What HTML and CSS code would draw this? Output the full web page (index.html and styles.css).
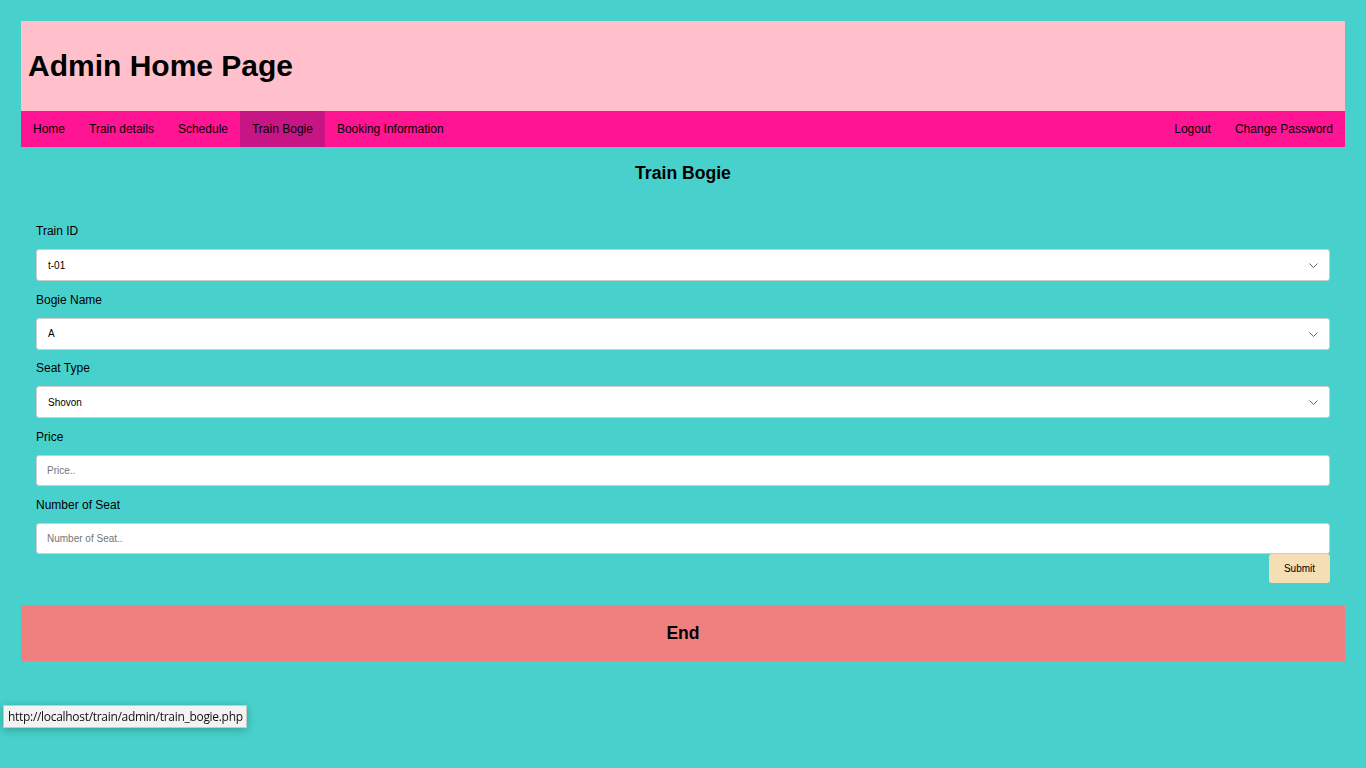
FILE: index.html
```html
<!DOCTYPE html>
<html lang="en">
<head>
<meta charset="utf-8">
<title>Admin Home Page</title>
<link rel="stylesheet" href="styles.css">
</head>
<body>
<div class="page">
  <header class="header">
    <h1 class="title">Admin Home Page</h1>
  </header>
  <nav class="nav">
    <div class="nav-left">
      <a class="nav-link" href="#">Home</a>
      <a class="nav-link" href="#">Train details</a>
      <a class="nav-link" href="#">Schedule</a>
      <a class="nav-link active" href="#">Train Bogie</a>
      <a class="nav-link" href="#">Booking Information</a>
    </div>
    <div class="nav-right">
      <a class="nav-link" href="#">Logout</a>
      <a class="nav-link" href="#">Change Password</a>
    </div>
  </nav>
  <main class="main">
    <h3 class="heading">Train Bogie</h3>
    <form class="form">
      <label class="label">Train ID</label>
      <div class="select-wrap">
        <select class="field select"><option>t-01</option></select>
        <svg class="chevron" width="9" height="5" viewBox="0 0 9 5"><path d="M0.5 0.5 L4.5 4.5 L8.5 0.5" fill="none" stroke="#666" stroke-width="1"/></svg>
      </div>
      <label class="label">Bogie Name</label>
      <div class="select-wrap">
        <select class="field select"><option>A</option></select>
        <svg class="chevron" width="9" height="5" viewBox="0 0 9 5"><path d="M0.5 0.5 L4.5 4.5 L8.5 0.5" fill="none" stroke="#666" stroke-width="1"/></svg>
      </div>
      <label class="label">Seat Type</label>
      <div class="select-wrap">
        <select class="field select"><option>Shovon</option></select>
        <svg class="chevron" width="9" height="5" viewBox="0 0 9 5"><path d="M0.5 0.5 L4.5 4.5 L8.5 0.5" fill="none" stroke="#666" stroke-width="1"/></svg>
      </div>
      <label class="label">Price</label>
      <input class="field input" type="text" placeholder="Price..">
      <label class="label">Number of Seat</label>
      <input class="field input last" type="text" placeholder="Number of Seat..">
      <div class="actions">
        <button class="submit" type="button">Submit</button>
      </div>
    </form>
  </main>
  <footer class="footer">
    <h3 class="footer-text">End</h3>
  </footer>
</div>
<div class="status">http://localhost/train/admin/train_bogie.php</div>
</body>
</html>
```
FILE: styles.css
```css
html, body {
  margin: 0;
  padding: 0;
}
body {
  background: #48d1cc;
  font-family: "Liberation Sans", Arial, sans-serif;
  color: #000;
  min-height: 768px;
}
.page {
  padding: 21px 21px 0 21px;
}
.header {
  background: #ffc0cb;
  height: 90px;
  display: flex;
  align-items: center;
  padding-left: 7px;
}
.title {
  margin: 0;
  font-size: 30px;
  font-weight: bold;
  line-height: 34px;
}
.nav {
  background: #ff1493;
  height: 36px;
  display: flex;
  justify-content: space-between;
}
.nav-left, .nav-right {
  display: flex;
}
.nav-link {
  display: block;
  padding: 0 12px;
  line-height: 36px;
  font-size: 12px;
  color: #000;
  text-decoration: none;
}
.nav-link.active {
  background: #c71585;
}
.main {
  padding: 0 15px;
}
.heading {
  margin: 0;
  padding-top: 16px;
  font-size: 17.6px;
  line-height: 20px;
  text-align: center;
  font-weight: bold;
}
.form {
  display: flex;
  flex-direction: column;
  padding-top: 41px;
}
.label {
  display: block;
  font-size: 12px;
  line-height: 14px;
  margin-bottom: 11px;
}
.select-wrap {
  position: relative;
  margin-bottom: 11.5px;
}
.field {
  box-sizing: border-box;
  width: 100%;
  height: 32px;
  border: 1px solid #cccccc;
  border-radius: 3px;
  background: #fff;
  font-family: "Liberation Sans", Arial, sans-serif;
  font-size: 10px;
  color: #000;
  padding: 0 11px;
  margin: 0;
}
.select {
  display: block;
  appearance: none;
  -webkit-appearance: none;
  outline: none;
}
.chevron {
  position: absolute;
  right: 12px;
  top: 14px;
  pointer-events: none;
}
.input {
  display: block;
  height: 31px;
  margin-bottom: 12px;
  padding: 0 10px;
}
.input.last {
  margin-bottom: 0;
}
.input::placeholder {
  color: #757575;
}
.actions {
  display: flex;
  justify-content: flex-end;
}
.submit {
  width: 61px;
  height: 29px;
  border: none;
  border-radius: 3px;
  background: #f5deb3;
  font-family: "Liberation Sans", Arial, sans-serif;
  font-size: 10px;
  color: #000;
  padding: 0;
}
.footer {
  margin-top: 22px;
  background: #f08080;
  height: 56px;
  display: flex;
  align-items: center;
  justify-content: center;
}
.footer-text {
  margin: 0;
  font-size: 17.6px;
  line-height: 20px;
  font-weight: bold;
}
.status {
  position: fixed;
  left: 3px;
  top: 705px;
  box-sizing: border-box;
  height: 23px;
  padding: 0 3px 0 4px;
  background: #f3f3f3;
  border: 1px solid #c9c9c9;
  box-shadow: 0 2px 8px rgba(0, 0, 0, 0.25);
  font-family: "Open Sans", "Noto Sans", sans-serif;
  font-size: 12px;
  line-height: 21px;
  color: #111;
  letter-spacing: -0.3px;
}
```
